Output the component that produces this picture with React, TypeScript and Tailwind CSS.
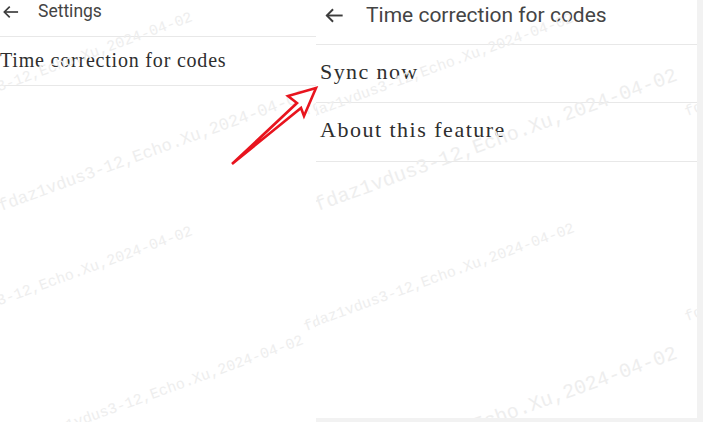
import React from 'react';

const MARK = 'fdaz1vdus3-12,Echo.Xu,2024-04-02';

function Watermark({ className }: { className: string }) {
  return (
    <span
      className={`pointer-events-none absolute whitespace-nowrap leading-none text-[#eeeeee] font-['Liberation_Mono',monospace] origin-[0_100%] -rotate-[20deg] ${className}`}
    >
      {MARK}
    </span>
  );
}

function BackArrow({ size }: { size: number }) {
  return (
    <svg width={size} height={size} viewBox="0 0 24 24" fill="none" stroke="#3c3c3c" strokeWidth="2">
      <path d="M20.5 12H4" />
      <path d="M10.5 5.5 4 12l6.5 6.5" />
    </svg>
  );
}

export default function App() {
  return (
    <div className="relative flex w-[703px] h-[422px] overflow-hidden bg-[#f2f2f2]">
      {/* left screen: Settings */}
      <div className="relative w-[316px] h-full shrink-0 overflow-hidden bg-white">
        <div className="flex h-[37px] items-center pb-[13px] border-b border-[#e8e8e8]">
          <span className="flex w-[22px] justify-center">
            <BackArrow size={20} />
          </span>
          <span className="ml-[16px] text-[17.5px] leading-none text-[#444] font-['Roboto',sans-serif]">
            Settings
          </span>
        </div>
        <div className="flex h-[49px] items-center pb-[2px] border-b border-[#e8e8e8]">
          <span className="text-[20px] leading-none tracking-[0.8px] text-[#2e2e2e] font-['Liberation_Serif',serif]">
            Time correction for codes
          </span>
        </div>

        <Watermark className="left-[-76px] top-[108px] text-[15px]" />
        <Watermark className="left-[2px] top-[198px] text-[17px]" />
        <Watermark className="left-[-76px] top-[322px] text-[15px]" />
        <Watermark className="left-[35px] top-[431px] text-[15px]" />
        <Watermark className="left-[307px] top-[104px] text-[15px]" />
        <Watermark className="left-[307px] top-[320px] text-[15px]" />
      </div>

      {/* right screen: Time correction for codes */}
      <div className="relative w-[381px] h-[418px] shrink-0 overflow-hidden bg-white">
        <div className="flex h-[45px] items-center pb-[14px] border-b border-[#e8e8e8]">
          <span className="ml-[6px] flex w-[24px] justify-center">
            <BackArrow size={23} />
          </span>
          <span className="ml-[20px] text-[21px] leading-none text-[#444] font-['Roboto',sans-serif]">
            Time correction for codes
          </span>
        </div>
        <div className="flex h-[58px] items-center pb-[4px] pl-[4px] border-b border-[#e8e8e8]">
          <span className="text-[22px] leading-none tracking-[1.4px] text-[#2e2e2e] font-['Liberation_Serif',serif]">
            Sync now
          </span>
        </div>
        <div className="flex h-[59px] items-center pb-[4px] pl-[4px] border-b border-[#e8e8e8]">
          <span className="text-[22px] leading-none tracking-[1.5px] text-[#2e2e2e] font-['Liberation_Serif',serif]">
            About this feature
          </span>
        </div>

        <Watermark className="left-[-11px] top-[109px] text-[15px]" />
        <Watermark className="left-[3px] top-[196px] text-[20px]" />
        <Watermark className="left-[-10px] top-[319px] text-[15px]" />
        <Watermark className="left-[3px] top-[474px] text-[20px]" />
        <Watermark className="left-[372px] top-[310px] text-[15px]" />
        <Watermark className="left-[372px] top-[105px] text-[15px]" />
      </div>

      {/* red annotation arrow */}
      <svg className="pointer-events-none absolute left-0 top-0" width="703" height="422">
        <polygon
          points="232,164 297,103 288,96 316,88 304,116 301,108"
          fill="white"
          stroke="#e8141e"
          strokeWidth="2.6"
          strokeLinejoin="miter"
        />
      </svg>
    </div>
  );
}
